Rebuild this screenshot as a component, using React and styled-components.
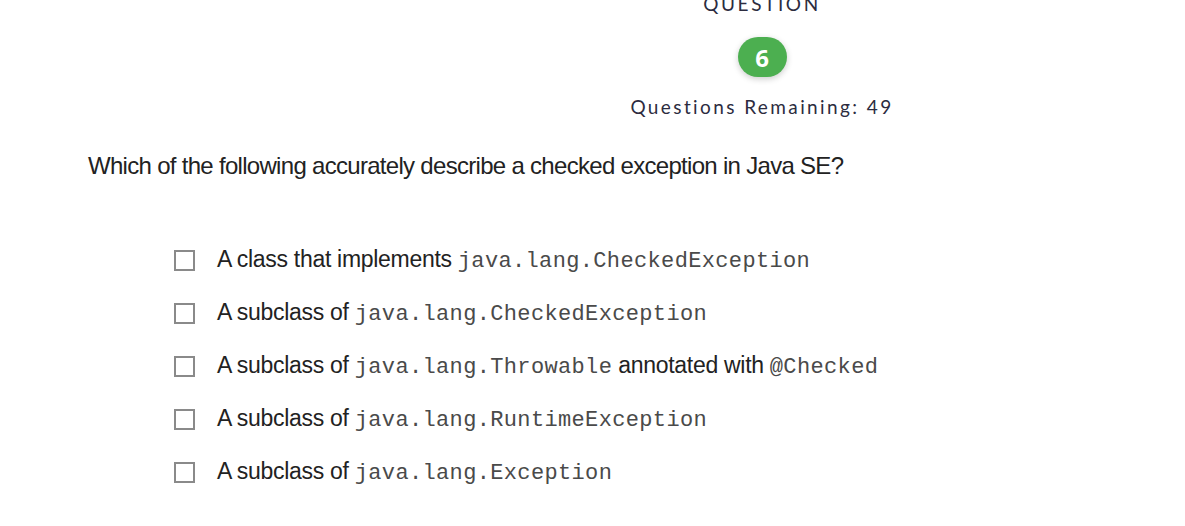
import React from "react";
import styled, { createGlobalStyle } from "styled-components";

const GlobalStyle = createGlobalStyle`
	html, body {
		margin: 0;
		padding: 0;
		background: #fff;
		overflow: hidden;
	}
	body {
		font-family: "Liberation Sans", Arial, sans-serif;
		color: #222;
	}
`;

const Page = styled.div`
	width: 1185px;
	height: 526px;
	overflow: hidden;
`;

const Header = styled.header`
	display: flex;
	flex-direction: column;
	align-items: center;
	padding-left: 339px;
	width: 846px;
	margin-top: -8px;
`;

const Label = styled.div`
	font-family: Lato, "Open Sans", sans-serif;
	font-size: 19px;
	line-height: 24px;
	letter-spacing: 2.6px;
	color: #2c2c40;
`;

const Badge = styled.div`
	margin-top: 21px;
	width: 49px;
	height: 40px;
	border-radius: 20px;
	background: #4caf50;
	color: #fff;
	display: flex;
	align-items: center;
	justify-content: center;
	font-family: "Open Sans", sans-serif;
	font-weight: 700;
	font-size: 24px;
	box-shadow: 0 2px 6px rgba(0, 0, 0, 0.2);
`;

const Remaining = styled.div`
	margin-top: 18px;
	font-family: Lato, "Open Sans", sans-serif;
	font-size: 19px;
	line-height: 24px;
	letter-spacing: 2.4px;
	color: #2c2c40;
`;

const Main = styled.main`
	padding-left: 88px;
`;

const Question = styled.h2`
	margin: 33px 0 0;
	font-weight: 400;
	font-size: 24px;
	line-height: 28px;
	letter-spacing: -0.7px;
	color: #222;
`;

const Options = styled.ul`
	list-style: none;
	margin: 65px 0 0;
	padding: 0 0 0 86px;
	display: flex;
	flex-direction: column;
	gap: 23px;
`;

const Option = styled.li`
	display: flex;
	align-items: center;
	height: 30px;
	font-size: 23px;
	letter-spacing: -0.3px;
	color: #222;
	white-space: pre;
`;

const Box = styled.span`
	box-sizing: border-box;
	width: 21px;
	height: 21px;
	border: 2px solid #8a8a8a;
	margin-right: 22px;
	flex: none;
`;

const Code = styled.code`
	font-family: "Liberation Mono", "Courier New", monospace;
	font-size: 22px;
	letter-spacing: 0.35px;
	color: #4a4a4a;
`;

const options = [
	["A class that implements ", "java.lang.CheckedException"],
	["A subclass of ", "java.lang.CheckedException"],
	["A subclass of ", "java.lang.Throwable", " annotated with ", "@Checked"],
	["A subclass of ", "java.lang.RuntimeException"],
	["A subclass of ", "java.lang.Exception"],
];

export default function App() {
	return (
		<Page>
			<GlobalStyle />
			<Header>
				<Label>QUESTION</Label>
				<Badge>6</Badge>
				<Remaining>Questions Remaining: 49</Remaining>
			</Header>
			<Main>
				<Question>
					Which of the following accurately describe a checked exception in
					Java SE?
				</Question>
				<Options>
					{options.map((parts, i) => (
						<Option key={i}>
							<Box />
							<span>
								{parts.map((p, j) =>
									j % 2 === 1 ? <Code key={j}>{p}</Code> : p
								)}
							</span>
						</Option>
					))}
				</Options>
			</Main>
		</Page>
	);
}
